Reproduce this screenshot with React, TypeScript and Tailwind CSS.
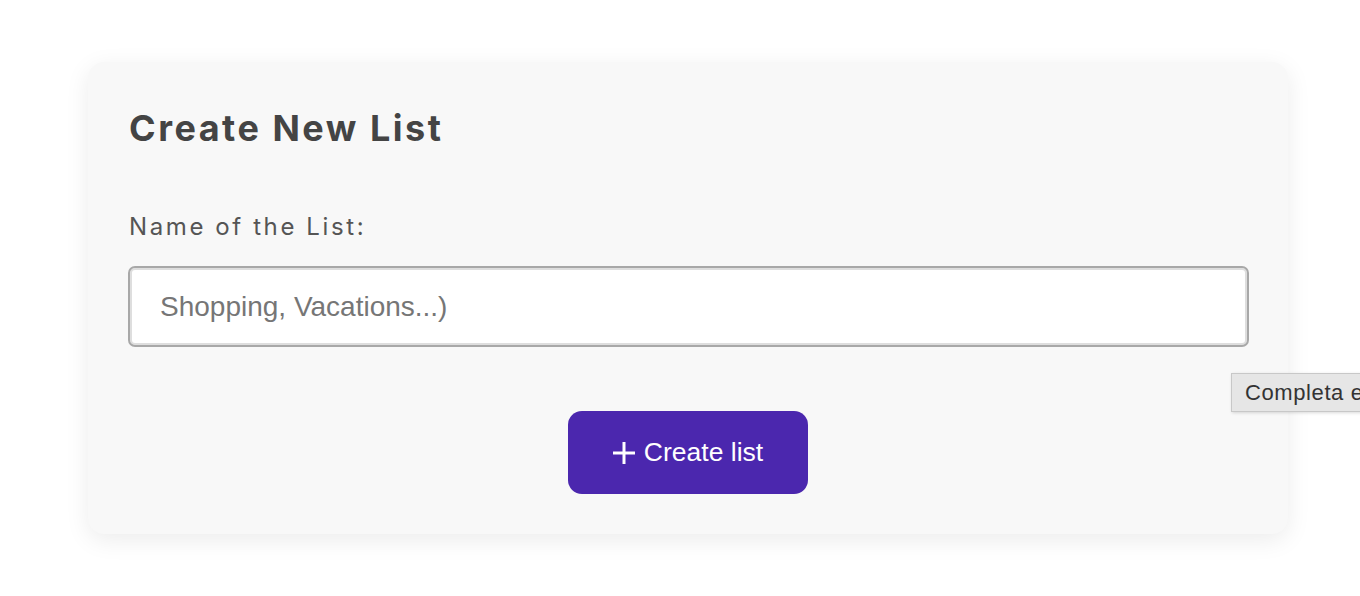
export default function App() {
  return (
    <div className="min-h-[596px] w-full overflow-hidden bg-white relative">
      <div className="pl-[88px] pt-[62px]">
        <div className="w-[1200px] h-[472px] rounded-2xl bg-[#f8f8f8] shadow-[0_6px_24px_rgba(0,0,0,0.08)] pl-[40px] pt-[48px]">
          <h1
            className="pl-[1px] text-[36px] leading-none font-bold text-[#444] tracking-[2.5px]"
            style={{ fontFamily: 'Inter, "Open Sans", sans-serif' }}
          >
            Create New List
          </h1>
          <label
            className="block pl-[1px] mt-[69px] text-[24px] leading-none font-normal text-[#555] tracking-[2.6px]"
            style={{ fontFamily: 'Inter, "Open Sans", sans-serif' }}
          >
            Name of the List:
          </label>
          <div className="mt-[27px] w-[1121px] h-[81px] rounded-[7px] border-2 border-[#a8a8a8] bg-white shadow-[inset_0_0_0_2px_#dedede] flex items-center pl-[30px]">
            <span
              className="text-[28px] text-[#767676]"
              style={{ fontFamily: '"Liberation Sans", Arial, sans-serif' }}
            >
              Shopping, Vacations...)
            </span>
          </div>
          <div className="flex justify-center mt-[64px] w-[1120px]">
            <button
              className="w-[240px] h-[83px] rounded-[14px] bg-[#4b27ae] text-white flex items-center justify-center gap-[9px] text-[26.5px]"
              style={{ fontFamily: '"Liberation Sans", Arial, sans-serif' }}
            >
              <svg width="22" height="22" viewBox="0 0 22 22" fill="none" stroke="currentColor" strokeWidth="3">
                <line x1="11" y1="0" x2="11" y2="22" />
                <line x1="0" y1="11" x2="22" y2="11" />
              </svg>
              Create list
            </button>
          </div>
        </div>
      </div>
      <div
        className="absolute left-[1231px] top-[373px] h-[39px] pl-[13px] pr-[20px] bg-[#e6e6e6] border border-[#c8c8c8] shadow-[1px_1px_3px_rgba(0,0,0,0.15)] flex items-center text-[22px] tracking-[0.6px] text-[#333] whitespace-nowrap"
        style={{ fontFamily: '"Liberation Sans", Arial, sans-serif' }}
      >
        Completa este campo
      </div>
    </div>
  );
}
